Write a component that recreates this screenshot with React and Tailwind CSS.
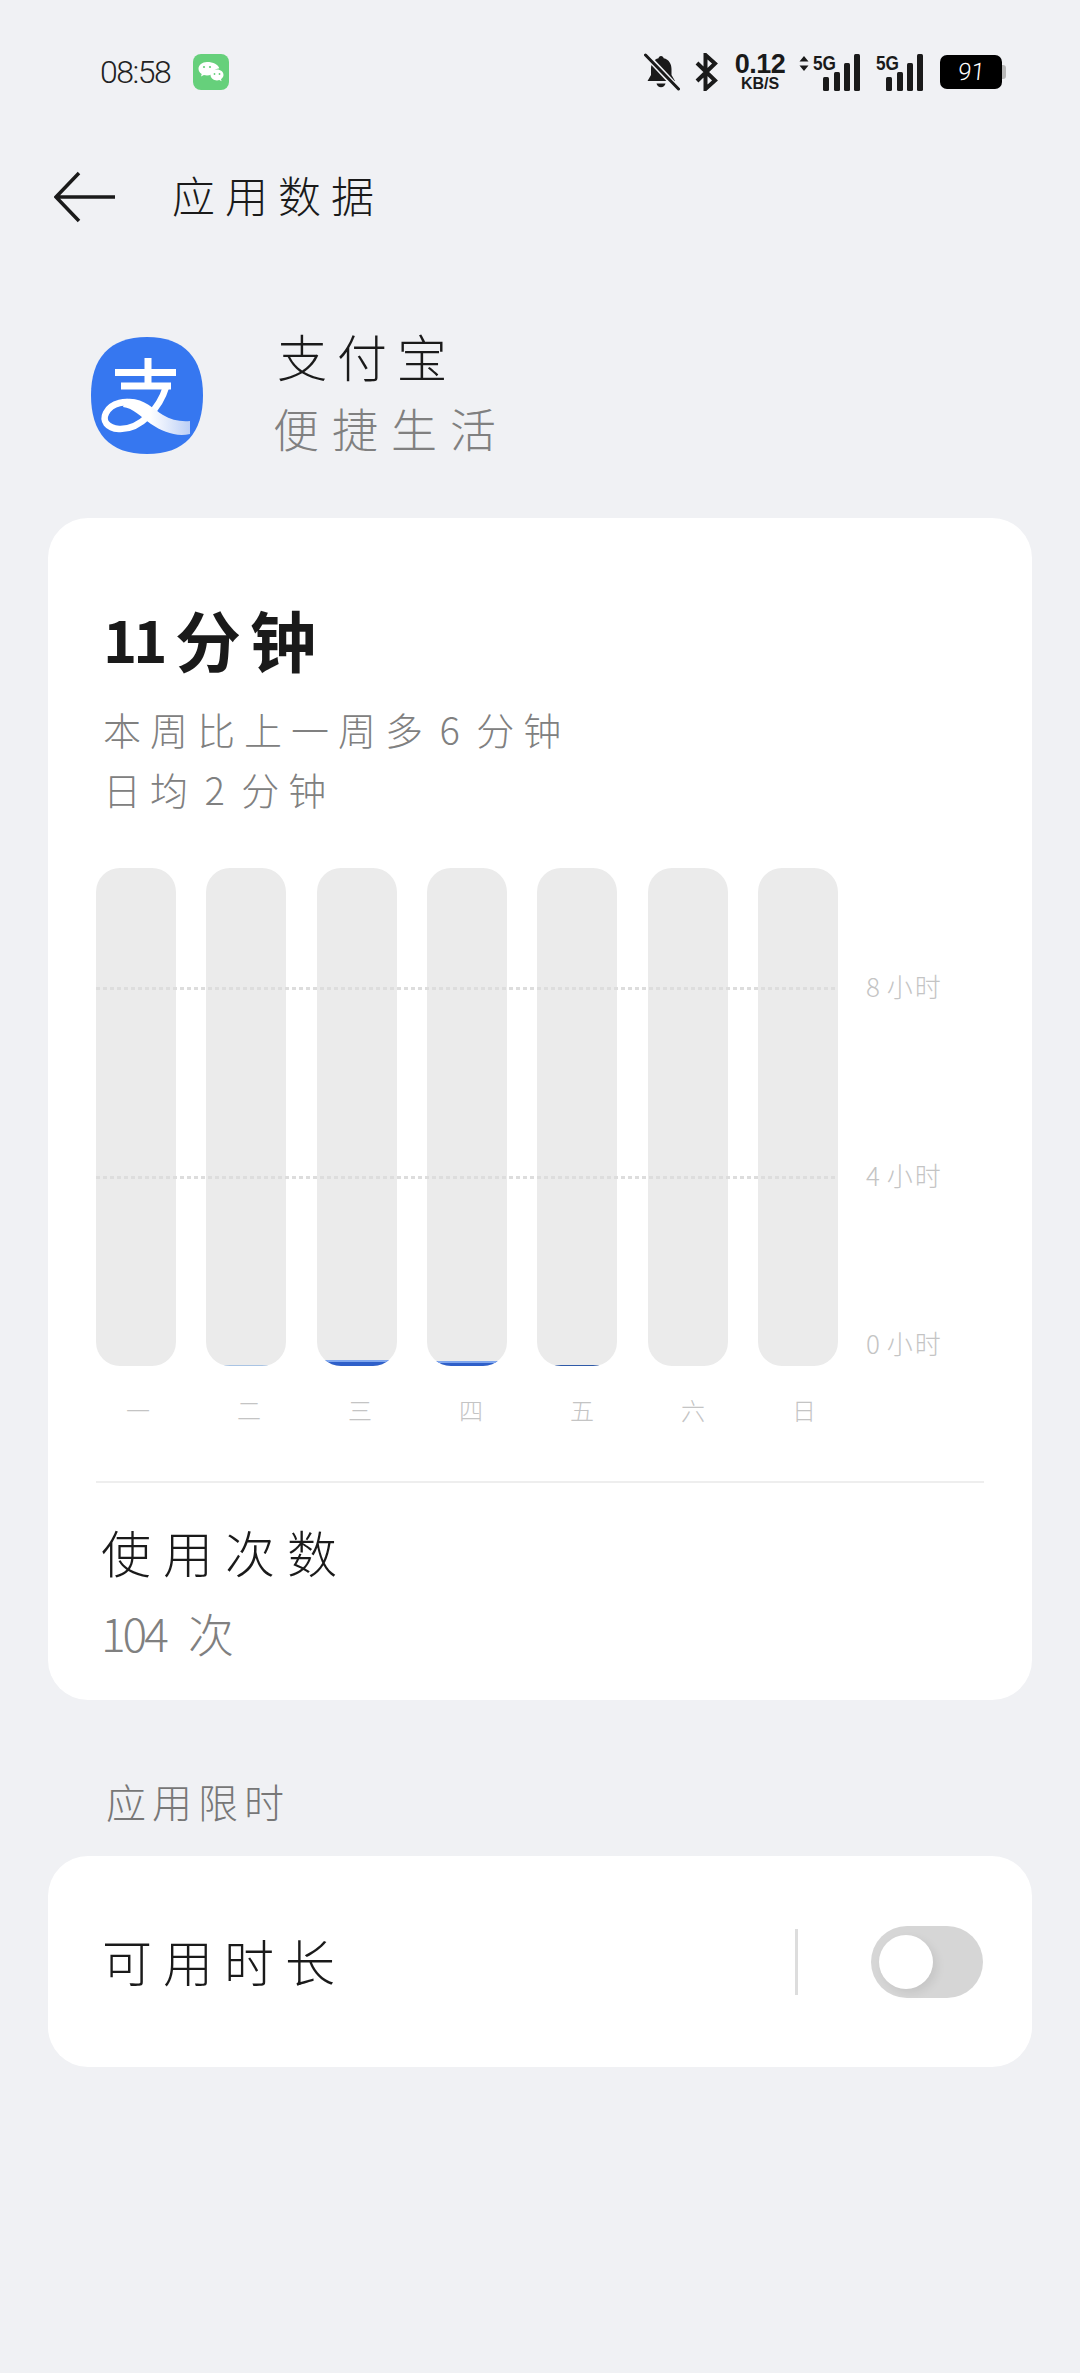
import React from 'react';

const days = [
    { label: '一', used: 0, tone: '' },
    { label: '二', used: 1, tone: 'bg-[#a9c4e4]' },
    { label: '三', used: 6, tone: 'bg-[#2e5fc9] border-t-2 border-[#7fa6ee]' },
    { label: '四', used: 5, tone: 'bg-[#2e5fc9] border-t-2 border-[#7fa6ee]' },
    { label: '五', used: 1, tone: 'bg-[#2f5aa8]' },
    { label: '六', used: 0, tone: '' },
    { label: '日', used: 0, tone: '' },
];

const WeChatIcon = () => (
    <svg width="36" height="36" viewBox="0 0 36 36">
        <rect width="36" height="36" rx="8" fill="#66d07b" />
        <path d="M14 8c-4.800 0-8.500 3-8.500 6.800 0 2.200 1.200 4.100 3.200 5.300l-.7 2.400 2.900-1.400c1 .3 2 .5 3.100.5 1.600 0 3-.4 4.300-1 1.600-3.600 3.800-5.600 8-6.300C25.300 10.700 20.300 8 14 8z" fill="#fff" />
        <path d="M30.500 21c0-3-2.900-5.400-6.500-5.400s-6.500 2.400-6.500 5.400 2.900 5.400 6.500 5.400c.8 0 1.600-.1 2.300-.4l2.300 1.200-.6-2c1.500-1 2.500-2.500 2.500-4.200z" fill="#fff" />
        <circle cx="11" cy="13" r="1.100" fill="#66d07b" />
        <circle cx="17" cy="13" r="1.100" fill="#66d07b" />
        <circle cx="21.500" cy="20" r="0.900" fill="#66d07b" />
        <circle cx="26.500" cy="20" r="0.900" fill="#66d07b" />
    </svg>
);

const MutedBell = () => (
    <svg width="36" height="38" viewBox="0 0 36 38">
        <path d="M17 3c1.500 0 2.500 1 2.700 2.300C25 6.500 27.500 11 27.500 16v6l3.500 6H3.500L7 22v-6c0-5 2.500-9.500 7.500-10.700C14.600 4 15.600 3 17 3z" fill="#1a1a1a" />
        <path d="M12.500 30.500h9c-.5 2.300-2.300 3.700-4.500 3.700s-4-1.400-4.500-3.700z" fill="#1a1a1a" />
        <path d="M2 2l32 34" stroke="#f0f1f4" strokeWidth="6" />
        <path d="M1.500 2l33 34" stroke="#1a1a1a" strokeWidth="3" strokeLinecap="round" />
    </svg>
);

const BluetoothIcon = () => (
    <svg width="24" height="38" viewBox="0 0 24 38">
        <path d="M3 10l18 17.500L11.500 36V2L21 10.500 3 28" fill="none" stroke="#1a1a1a" strokeWidth="4" />
    </svg>
);

const SignalIcon = ({ arrows }) => (
    <svg width={arrows ? 62 : 48} height="44" viewBox={`${arrows ? 0 : 14} -6 ${arrows ? 62 : 48} 44`} className="-mt-[6px]">
        {arrows && <path d="M5 2l4.500 5.500h-9zM5 17l-4.500-5.500h9z" fill="#1a1a1a" transform="translate(0 1)" />}
        <text x="14" y="17" fontFamily="Liberation Sans" fontWeight="700" fontSize="21" textLength="23" lengthAdjust="spacingAndGlyphs" fill="#1a1a1a">5G</text>
        <rect x="24" y="24" width="6" height="14" rx="1.500" fill="#1a1a1a" />
        <rect x="35" y="19" width="6" height="19" rx="1.500" fill="#1a1a1a" />
        <rect x="45" y="10" width="6" height="28" rx="1.500" fill="#1a1a1a" />
        <rect x="55" y="1" width="6" height="37" rx="1.500" fill="#1a1a1a" />
    </svg>
);

const AlipayLogo = () => (
    <svg width="112" height="117" viewBox="0 0 112 117">
        <defs>
            <linearGradient id="swoosh" x1="0" x2="1" y1="0" y2="0">
                <stop offset="0.4" stopColor="#ffffff" />
                <stop offset="1" stopColor="#bccff6" />
            </linearGradient>
        </defs>
        <path d="M56 0C94 0 112 22 112 58c0 38-18 59-56 59S0 96 0 58C0 22 18 0 56 0z" fill="#3677f0" />
        <path d="M24 35.500h61M57 21v28M30 49h50" stroke="#fff" strokeWidth="7" fill="none" />
        <path d="M75 50C69 70 50 93 28 92 16 91 11 84 15 76c5-10 20-14 33-8" stroke="#fff" strokeWidth="6.500" fill="none" />
        <path d="M35 62c17-2 27 10 37 16 8 5 18 7 27 6v13c-14 3-27-2-39-10C50 80 42 71 32 70z" fill="url(#swoosh)" />
    </svg>
);

const App = () => {
    return (
        <div className="h-[2373px] bg-[#f0f1f4] font-['Noto_Sans_CJK_SC','Noto_Sans',sans-serif] text-[#1a1a1a] overflow-hidden">
            <div className="h-[144px] flex items-center pl-[100px] pr-[74px]">
                <span className="font-['Roboto',sans-serif] font-light text-[32px] tracking-[-1.5px] w-[93px] text-[#222222]">08:58</span>
                <WeChatIcon />
                <div className="ml-auto flex items-center">
                    <MutedBell />
                    <div className="ml-[14px]"><BluetoothIcon /></div>
                    <div className="ml-[15px] w-[54px] flex flex-col items-center font-['Liberation_Sans',sans-serif] font-bold leading-none">
                        <span className="text-[27px] tracking-[-0.5px] leading-[23px]">0.12</span>
                        <span className="text-[16px] leading-[15px]">KB/S</span>
                    </div>
                    <div className="ml-[12px]"><SignalIcon arrows /></div>
                    <div className="ml-[15px]"><SignalIcon /></div>
                    <div className="ml-[16px] flex items-center">
                        <div className="w-[62px] h-[34px] rounded-[7px] bg-black text-white flex items-center justify-center font-['Roboto',sans-serif] font-light text-[24px]">
                            <span className="inline-block -skew-x-6">91</span>
                        </div>
                        <div className="w-[4px] h-[14px] rounded-r-[3px] bg-[#b8b8b8]" />
                    </div>
                </div>
            </div>

            <div className="h-[104px] flex items-center pl-[54px]">
                <svg width="62" height="52" viewBox="0 0 62 52" className="mt-[2px]">
                    <path d="M25 2L2 26l23 24M2 26h59" fill="none" stroke="#1a1a1a" strokeWidth="3.500" />
                </svg>
                <h1 className="ml-[56px] -mt-[3px] text-[43px] font-light tracking-[10px] leading-none">应用数据</h1>
            </div>

            <div className="h-[270px] flex items-start pl-[91px] pt-[71px]">
                <div className="mt-[18px]"><AlipayLogo /></div>
                <div className="ml-[74px]">
                    <div className="text-[50px] font-light tracking-[10px] leading-[72px]">支付宝</div>
                    <div className="text-[46px] font-light tracking-[13px] leading-[73px] text-[#808080] -ml-[4px]">便捷生活</div>
                </div>
            </div>

            <div className="mx-[48px] h-[1182px] bg-white rounded-[40px] pt-[80px]">
                <div className="pl-[55px]">
                    <div className="flex items-center font-bold leading-[80px]">
                        <span className="text-[58px] tracking-[-4px] w-[72px]">11</span>
                        <span className="text-[66px] tracking-[9px]">分钟</span>
                    </div>
                    <div className="mt-[21px] text-[38px] font-light tracking-[9px] [word-spacing:-10px] leading-[60px] text-[#808080]">
                        <div>本周比上一周多 6 分钟</div>
                        <div>日均 2 分钟</div>
                    </div>
                </div>

                <div className="relative mt-[49px] ml-[48px] w-[890px] h-[498px]">
                    <div className="flex justify-between w-[742px] h-full">
                        {days.map((day) => (
                            <div key={day.label} className="w-[80px] h-full rounded-[24px] bg-[#ebebeb] overflow-hidden flex flex-col justify-end">
                                {day.used > 0 && <div className={day.tone} style={{ height: day.used }} />}
                            </div>
                        ))}
                    </div>
                    <div className="absolute left-0 top-[119px] w-[742px] h-[3px] bg-[repeating-linear-gradient(90deg,#dddddd_0_4px,transparent_4px_7px)]" />
                    <div className="absolute left-0 top-[308px] w-[742px] h-[3px] bg-[repeating-linear-gradient(90deg,#dddddd_0_4px,transparent_4px_7px)]" />
                    <span className="absolute left-[770px] top-[100px] text-[26px] font-light leading-[36px] tracking-[2px] [word-spacing:-3px] text-[#c4c4c4]">8 小时</span>
                    <span className="absolute left-[770px] top-[289px] text-[26px] font-light leading-[36px] tracking-[2px] [word-spacing:-3px] text-[#c4c4c4]">4 小时</span>
                    <span className="absolute left-[770px] top-[457px] text-[26px] font-light leading-[36px] tracking-[2px] [word-spacing:-3px] text-[#c4c4c4]">0 小时</span>
                </div>

                <div className="ml-[50px] w-[746px] mt-[27px] flex justify-between">
                    {days.map((day) => (
                        <span key={day.label} className="w-[80px] text-center text-[24px] font-light leading-[34px] text-[#c4c4c4]">{day.label}</span>
                    ))}
                </div>

                <div className="mx-[48px] mt-[54px] border-t-2 border-[#eeeeee]" />

                <div className="pl-[53px] pt-[32px]">
                    <div className="text-[50px] font-light tracking-[12px] leading-[72px]">使用次数</div>
                    <div className="mt-[9px] flex items-center text-[46px] font-light leading-[72px] text-[#808080]">
                        <span className="tracking-[-3px] w-[87px]">104</span>
                        <span>次</span>
                    </div>
                </div>
            </div>

            <div className="h-[156px] pl-[106px] pt-[75px] text-[40px] font-light tracking-[6px] leading-[52px] text-[#777777]">应用限时</div>

            <div className="mx-[48px] h-[211px] bg-white rounded-[40px] flex items-center pl-[54px] pr-[49px]">
                <span className="text-[50px] font-light tracking-[11px] leading-none -mt-[4px]">可用时长</span>
                <div className="ml-auto w-[3px] h-[66px] bg-[#dddddd]" />
                <div className="ml-[73px] w-[112px] h-[72px] rounded-full bg-[#d6d6d6] flex items-center pl-[8px]">
                    <div className="w-[54px] h-[54px] rounded-full bg-white shadow-[4px_4px_10px_rgba(0,0,0,0.08)]" />
                </div>
            </div>
        </div>
    );
};

export default App;
